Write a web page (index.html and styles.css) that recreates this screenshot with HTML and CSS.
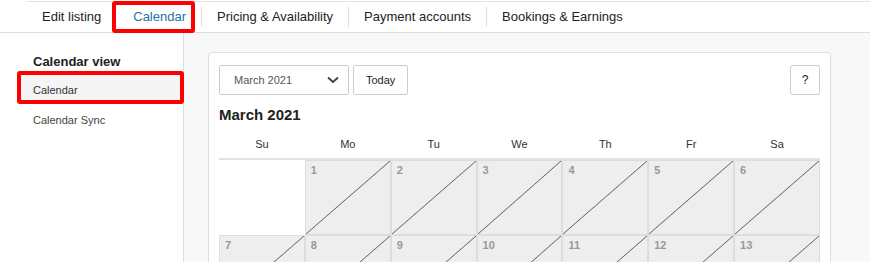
FILE: index.html
```html
<!DOCTYPE html>
<html lang="en">
<head>
    <meta charset="UTF-8">
    <title>Listing calendar</title>
    <link rel="stylesheet" href="styles.css">
</head>
<body>
    <header class="topbar">
        <nav class="tabs">
            <a class="tab">Edit listing</a>
            <a class="tab active">Calendar</a>
            <span class="tab-sep"></span>
            <a class="tab">Pricing &amp; Availability</a>
            <span class="tab-sep"></span>
            <a class="tab">Payment accounts</a>
            <span class="tab-sep"></span>
            <a class="tab">Bookings &amp; Earnings</a>
        </nav>
    </header>
    <div class="main">
        <aside class="sidebar">
            <div class="side-title">Calendar view</div>
            <div class="side-item selected">Calendar</div>
            <div class="side-item">Calendar Sync</div>
        </aside>
        <section class="content">
            <div class="card">
                <div class="toolbar">
                    <div class="month-select">
                        <span>March 2021</span>
                        <svg width="12" height="8" viewBox="0 0 12 8"><path d="M1 1.5 L6 6 L11 1.5" fill="none" stroke="#444" stroke-width="2"/></svg>
                    </div>
                    <button class="btn">Today</button>
                    <button class="btn help">?</button>
                </div>
                <h2 class="month-title">March 2021</h2>
                <table class="cal">
                    <thead>
                        <tr><th>Su</th><th>Mo</th><th>Tu</th><th>We</th><th>Th</th><th>Fr</th><th>Sa</th></tr>
                    </thead>
                    <tbody>
                        <tr>
                            <td class="empty"></td>
                            <td class="blocked"><span>1</span></td>
                            <td class="blocked"><span>2</span></td>
                            <td class="blocked"><span>3</span></td>
                            <td class="blocked"><span>4</span></td>
                            <td class="blocked"><span>5</span></td>
                            <td class="blocked"><span>6</span></td>
                        </tr>
                        <tr>
                            <td class="blocked"><span>7</span></td>
                            <td class="blocked"><span>8</span></td>
                            <td class="blocked"><span>9</span></td>
                            <td class="blocked"><span>10</span></td>
                            <td class="blocked"><span>11</span></td>
                            <td class="blocked"><span>12</span></td>
                            <td class="blocked"><span>13</span></td>
                        </tr>
                    </tbody>
                </table>
            </div>
        </section>
    </div>
</body>
</html>
```

FILE: styles.css
```css
body {
    margin: 0;
    font-family: "Liberation Sans", Arial, sans-serif;
    background-color: #f8f8f8;
    color: #222;
    height: 100vh;
    overflow: hidden;
}
.topbar {
    background-color: #fff;
    padding: 1px 0 0 27px;
    border-bottom: 1px solid #ddd;
}
.tabs {
    display: flex;
    align-items: center;
    height: 30px;
    border-top: 1px solid #e2e2e2;
}
.tab {
    padding: 0 15px;
    font-size: 13px;
    color: #222;
    line-height: 30px;
}
.tab.active {
    position: relative;
    margin-left: 2px;
    color: #2572a6;
}
.tab.active::after {
    content: "";
    position: absolute;
    left: -6px;
    right: 6px;
    top: -1px;
    bottom: -1px;
    border: 4px solid #f00;
    border-radius: 3px;
}
.tab-sep {
    width: 1px;
    height: 20px;
    background-color: #ddd;
}
.main {
    display: flex;
    height: calc(100vh - 33px);
    overflow: hidden;
}
.sidebar {
    width: 183px;
    flex-shrink: 0;
    background-color: #fff;
    border-right: 1px solid #ddd;
    padding-top: 21px;
}
.side-title {
    padding-left: 33px;
    font-size: 13px;
    font-weight: bold;
    line-height: 16px;
    color: #222;
    margin-bottom: 1px;
}
.side-item {
    position: relative;
    height: 20px;
    margin-left: 17px;
    padding: 10px 0 0 16px;
    font-size: 11px;
    line-height: 13px;
    color: #444;
}
.side-item.selected {
    padding-top: 13px;
    background-color: #f5f5f5;
    color: #333;
}
.side-item.selected::after {
    content: "";
    position: absolute;
    left: 0;
    top: 0;
    right: -1px;
    bottom: 0;
    border: 4px solid #f00;
    border-radius: 3px;
}
.content {
    padding: 19px 0 0 24px;
}
.card {
    width: 601px;
    background-color: #fff;
    border: 1px solid #ddd;
    border-radius: 4px;
    padding: 12px 10px 0 10px;
}
.toolbar {
    display: flex;
    gap: 4px;
    height: 30px;
}
.month-select {
    width: 130px;
    border: 1px solid #ccc;
    border-radius: 2px;
    display: flex;
    align-items: center;
    justify-content: space-between;
    padding: 0 9px 0 14px;
    box-sizing: border-box;
    font-size: 11px;
    color: #555;
}
.btn {
    font-family: inherit;
    font-size: 11px;
    color: #222;
    background-color: #fff;
    border: 1px solid #ccc;
    border-radius: 2px;
    padding: 0 12px;
    height: 30px;
}
.btn.help {
    margin-left: auto;
    width: 30px;
    padding: 0;
    font-size: 12px;
}
.month-title {
    margin: 11px 0 0;
    font-size: 15px;
    line-height: 18px;
    font-weight: bold;
    color: #222;
}
.cal {
    margin-top: 6px;
    width: 601px;
    border-collapse: separate;
    border-spacing: 0;
    table-layout: fixed;
}
.cal th {
    height: 28px;
    font-size: 11px;
    font-weight: normal;
    color: #333;
    border-bottom: 2px solid #e2e2e2;
    padding: 0;
}
.cal td {
    height: 73px;
    padding: 0;
    vertical-align: top;
    border: 1px solid #ddd;
}
.cal td.empty {
    border-color: transparent;
}
.cal td.blocked {
    background-color: #eee;
    background-image: linear-gradient(to bottom right, transparent calc(50% - 0.8px), #666 50%, transparent calc(50% + 0.8px));
}
.cal td span {
    display: block;
    padding: 3px 0 0 5px;
    font-size: 11px;
    line-height: 13px;
    font-weight: bold;
    color: #999;
}
```
